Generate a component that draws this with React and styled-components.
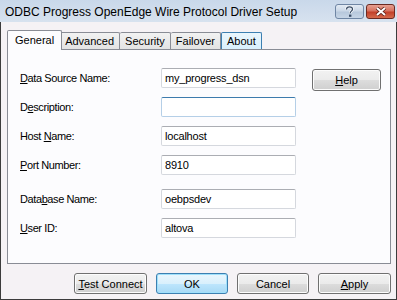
import styled, { createGlobalStyle, css } from "styled-components";

const GlobalStyle = createGlobalStyle`
  html, body {
    margin: 0;
    padding: 0;
    background: #f5f2f5;
  }
  body {
    font-family: "Liberation Sans", Arial, sans-serif;
    font-size: 11px;
    color: #000;
  }
`;

const Window = styled.div`
  width: 397px;
  height: 300px;
  box-sizing: border-box;
  display: flex;
  flex-direction: column;
  background: #f5f2f5;
  border-left: 1px solid #3c3c3c;
  border-right: 1px solid #3c3c3c;
  border-bottom: 1px solid #3c3c3c;
`;

const TitleBar = styled.div`
  height: 22px;
  flex-shrink: 0;
  display: flex;
  align-items: center;
  padding: 0 2px 0 5px;
  margin: 0 -1px;
  background: linear-gradient(#c9d8ea, #d7e2ef);
`;

const Title = styled.div`
  flex: 1;
  font-family: "Liberation Sans", Arial, sans-serif;
  font-size: 12px;
  color: #000;
  padding-top: 1px;
`;

const CaptionButton = styled.div`
  width: 29px;
  height: 15px;
  box-sizing: border-box;
  border-radius: 3px;
  display: flex;
  align-items: center;
  justify-content: center;
  margin-left: 2px;
  ${(p) =>
    p.close
      ? css`
          border: 1px solid #6b2a22;
          background: linear-gradient(#e6a092 0%, #d7725f 45%, #c2402a 55%, #d56a4c 100%);
        `
      : css`
          border: 1px solid #6f86a4;
          background: linear-gradient(#e3ebf4 0%, #cad7e7 45%, #b7c8dc 55%, #c6d5e6 100%);
        `}
`;

const Body = styled.div`
  flex: 1;
  display: flex;
  flex-direction: column;
  padding: 8px 5px 0 6px;
`;

const TabRow = styled.div`
  display: flex;
  align-items: flex-end;
  height: 19px;
  padding-left: 2px;
  position: relative;
  z-index: 1;
`;

const Tab = styled.div`
  height: 17px;
  box-sizing: border-box;
  padding: 0 5px;
  display: flex;
  align-items: center;
  border: 1px solid #898c95;
  border-bottom: none;
  border-left: none;
  border-radius: 2px 2px 0 0;
  background: linear-gradient(#f2f2f2, #e3e3e3);
  ${(p) =>
    p.hover &&
    css`
      border: 1px solid #3c7fb1;
      border-bottom: none;
      background: linear-gradient(#eaf6fd, #d9f0fc);
    `}
  ${(p) =>
    p.active &&
    css`
      height: 20px;
      margin: 0 -2px -1px -2px;
      padding: 0 7px 2px 7px;
      border: 1px solid #898c95;
      border-bottom: none;
      background: #fcfcfe;
      position: relative;
      z-index: 2;
    `}
`;

const Panel = styled.div`
  height: 215px;
  box-sizing: border-box;
  border: 1px solid #898c95;
  background: #fcfcfe;
  display: flex;
  padding: 18px 0 0 12px;
`;

const Form = styled.div`
  display: flex;
  flex-direction: column;
  gap: 9px;
`;

const Row = styled.div`
  display: flex;
  align-items: center;
  margin-top: ${(p) => (p.spaced ? "5px" : "0")};
`;

const Label = styled.label`
  width: 141px;
  font-size: 11px;
  letter-spacing: -0.4px;
`;

const Key = styled.span`
  text-decoration: underline;
`;

const Field = styled.div`
  width: 135px;
  height: 20px;
  box-sizing: border-box;
  background: #fff;
  border: 1px solid #d5d8de;
  border-top-color: #abadb3;
  border-radius: 2px;
  padding: 0 3px;
  display: flex;
  align-items: center;
  font-size: 11px;
  letter-spacing: -0.2px;
  ${(p) =>
    p.focused &&
    css`
      border-color: #b5cfe7;
      border-top-color: #3d7bad;
    `}
`;

const Side = styled.div`
  padding: 1px 0 0 16px;
`;

const Button = styled.div`
  width: ${(p) => p.w || 72}px;
  height: ${(p) => p.h || 21}px;
  box-sizing: border-box;
  border: 1px solid #707070;
  border-radius: 3px;
  display: flex;
  align-items: center;
  justify-content: center;
  font-size: 11px;
  background: linear-gradient(#f2f2f2 0%, #ebebeb 50%, #dddddd 51%, #cfcfcf 100%);
  box-shadow: inset 0 0 0 1px #fcfcfc;
  ${(p) =>
    p.primary &&
    css`
      border-color: #3c7fb1;
      background: linear-gradient(#eaf6fd 0%, #d9f0fc 50%, #bee6fd 51%, #a7d9f5 100%);
      box-shadow: inset 0 0 0 1px #9fe0fb;
    `}
`;

const ButtonRow = styled.div`
  display: flex;
  justify-content: flex-end;
  gap: 9px;
  padding: 9px 0 0 0;
`;

const fields = [
  { label: <><Key>D</Key>ata Source Name:</>, value: "my_progress_dsn" },
  { label: <>D<Key>e</Key>scription:</>, value: "", focused: true },
  { label: <>Host <Key>N</Key>ame:</>, value: "localhost" },
  { label: <><Key>P</Key>ort Number:</>, value: "8910" },
  { label: <>Data<Key>b</Key>ase Name:</>, value: "oebpsdev", spaced: true },
  { label: <><Key>U</Key>ser ID:</>, value: "altova" },
];

const App = () => {
  return (
    <>
      <GlobalStyle />
      <Window>
        <TitleBar>
          <Title>ODBC Progress OpenEdge Wire Protocol Driver Setup</Title>
          <CaptionButton>
            <svg width="9" height="11" viewBox="0 0 9 11">
              <path
                d="M1.5 3.5 C1.5 1.5 3 0.8 4.5 0.8 C6.3 0.8 7.5 2 7.5 3.3 C7.5 5 5.2 5.3 5.2 7.2"
                fill="none"
                stroke="#fff"
                strokeWidth="2.6"
              />
              <path
                d="M1.5 3.5 C1.5 1.5 3 0.8 4.5 0.8 C6.3 0.8 7.5 2 7.5 3.3 C7.5 5 5.2 5.3 5.2 7.2"
                fill="none"
                stroke="#3a4d66"
                strokeWidth="1.3"
              />
              <rect x="4" y="8.6" width="2.4" height="2.2" fill="#3a4d66" />
            </svg>
          </CaptionButton>
          <CaptionButton close>
            <svg width="12" height="9" viewBox="0 0 12 9">
              <path d="M2 1 L10 8 M10 1 L2 8" stroke="#5a2019" strokeWidth="3.6" />
              <path d="M2 1 L10 8 M10 1 L2 8" stroke="#fff" strokeWidth="2" />
            </svg>
          </CaptionButton>
        </TitleBar>
        <Body>
          <TabRow>
            <Tab active>General</Tab>
            <Tab>Advanced</Tab>
            <Tab>Security</Tab>
            <Tab>Failover</Tab>
            <Tab hover>About</Tab>
          </TabRow>
          <Panel>
            <Form>
              {fields.map((f, i) => (
                <Row key={i} spaced={f.spaced}>
                  <Label>{f.label}</Label>
                  <Field focused={f.focused}>{f.value}</Field>
                </Row>
              ))}
            </Form>
            <Side>
              <Button w={69} h={22}>
                <span>
                  <Key>H</Key>elp
                </span>
              </Button>
            </Side>
          </Panel>
          <ButtonRow>
            <Button w={73}>
              <span>
                <Key>T</Key>est Connect
              </span>
            </Button>
            <Button primary w={72}>OK</Button>
            <Button w={72}>Cancel</Button>
            <Button w={73}>
              <span>
                <Key>A</Key>pply
              </span>
            </Button>
          </ButtonRow>
        </Body>
      </Window>
    </>
  );
};

export default App;
